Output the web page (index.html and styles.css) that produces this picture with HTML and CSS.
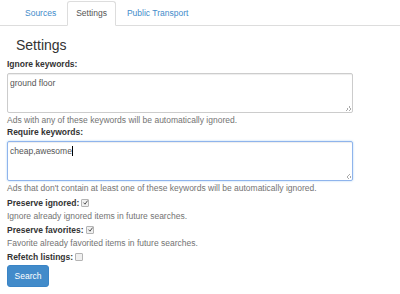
FILE: index.html
```html
<!DOCTYPE html>
<html>
<head>
<meta charset="utf-8">
<link rel="stylesheet" href="styles.css">
</head>
<body>
<ul class="tabs">
  <li><a class="tab">Sources</a></li>
  <li><a class="tab active">Settings</a></li>
  <li><a class="tab">Public Transport</a></li>
</ul>
<div class="content">
  <h2 class="title">Settings</h2>
  <label class="lbl">Ignore keywords:</label>
  <div class="ta">ground floor<span class="grip"></span></div>
  <p class="help">Ads with any of these keywords will be automatically ignored.</p>
  <label class="lbl">Require keywords:</label>
  <div class="ta focus">cheap,awesome<span class="caret"></span><span class="grip"></span></div>
  <p class="help">Ads that don't contain at least one of these keywords will be automatically ignored.</p>
  <div class="check-row first">Preserve ignored: <span class="cb"><svg viewBox="0 0 7 7" width="7" height="7"><path d="M1.5 3.6 L3 5.2 L5.6 1.6" fill="none" stroke="#555" stroke-width="1"/></svg></span></div>
  <p class="help">Ignore already ignored items in future searches.</p>
  <div class="check-row">Preserve favorites: <span class="cb"><svg viewBox="0 0 7 7" width="7" height="7"><path d="M1.5 3.6 L3 5.2 L5.6 1.6" fill="none" stroke="#555" stroke-width="1"/></svg></span></div>
  <p class="help">Favorite already favorited items in future searches.</p>
  <div class="check-row">Refetch listings: <span class="cb"></span></div>
  <button class="btn">Search</button>
</div>
</body>
</html>
```
FILE: styles.css
```css
html, body {
  margin: 0;
  padding: 0;
  background: #fff;
  font-family: "Liberation Sans", Arial, sans-serif;
  font-size: 8.5px;
  color: #333;
}
.tabs {
  list-style: none;
  margin: 0;
  padding: 1px 0 0 16px;
  display: flex;
  border-bottom: 1px solid #ddd;
}
.tab {
  display: block;
  padding: 5px 8px 6px;
  line-height: 12px;
  border: 1px solid transparent;
  border-radius: 3px 3px 0 0;
  margin-bottom: -1px;
  margin-right: 2px;
  color: #428bca;
}
.tab.active {
  color: #555;
  background: #fff;
  border-color: #ddd #ddd transparent;
}
.content {
  padding: 0 7px;
}
.title {
  margin: 11px 0 5px 9px;
  font-size: 14px;
  line-height: 16px;
  font-weight: normal;
  color: #333;
}
.lbl {
  display: block;
  font-weight: bold;
  line-height: 12px;
  margin-bottom: 3px;
}
.ta {
  position: relative;
  box-sizing: border-box;
  width: 346px;
  height: 40px;
  border: 1px solid #ccc;
  border-radius: 2px;
  padding: 3px 2px;
  line-height: 12px;
  color: #555;
  box-shadow: inset 0 1px 1px rgba(0,0,0,0.075);
}
.ta.focus {
  border-color: #8fb4ec;
  box-shadow: inset 0 1px 1px rgba(0,0,0,0.075), 0 0 2px rgba(102,175,233,0.6);
}
.caret {
  display: inline-block;
  width: 1px;
  height: 10px;
  background: #000;
  vertical-align: -2px;
}
.grip {
  position: absolute;
  right: 1px;
  bottom: 1px;
  width: 5px;
  height: 5px;
  background: linear-gradient(135deg, transparent 40%, #aaa 40%, #aaa 50%, transparent 50%, transparent 70%, #aaa 70%, #aaa 80%, transparent 80%);
}
.help {
  margin: 2px 0 0;
  line-height: 11px;
  color: #737373;
}
.check-row {
  font-weight: bold;
  line-height: 12px;
  margin-top: 2px;
  display: flex;
  align-items: center;
}
.check-row.first {
  margin-top: 3px;
}
.cb {
  display: inline-block;
  box-sizing: border-box;
  width: 8px;
  height: 8px;
  border: 1px solid #b4b4b4;
  border-radius: 1px;
  background: #f0f0f0;
  margin-left: 2px;
  position: relative;
}
.cb svg {
  position: absolute;
  left: 0;
  top: -1px;
}
.btn {
  display: block;
  margin-top: 2px;
  width: 42px;
  height: 22px;
  border: 1px solid #3a84c6;
  border-radius: 3px;
  background: #428bca;
  color: #fff;
  font-family: "Liberation Sans", Arial, sans-serif;
  font-size: 8.5px;
  padding: 0;
}
```
